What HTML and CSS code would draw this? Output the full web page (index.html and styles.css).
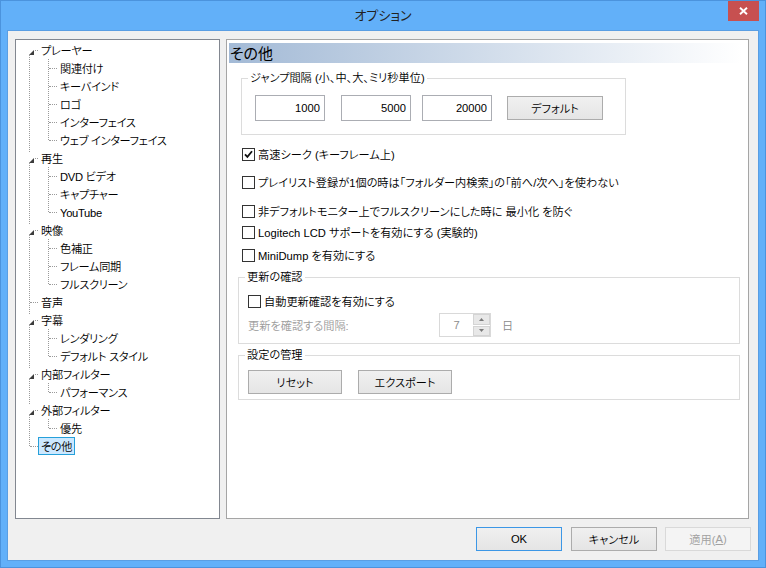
FILE: index.html
```html
<!DOCTYPE html>
<html lang="ja">
<head>
<meta charset="utf-8">
<title>オプション</title>
<link rel="stylesheet" href="styles.css">
</head>
<body>
<div class="window">
  <div class="titlebar">
    <div class="title">オプション</div>
    <div class="close"><svg width="9" height="8" viewBox="0 0 9 8"><path d="M1 0.8L8 7.2M8 0.8L1 7.2" stroke="#fff" stroke-width="1.9" fill="none"/></svg></div>
  </div>
  <div class="client">
    <div class="main">
      <div class="tree">
        <ul class="roots">
          <li class="root">
            <div class="row"><span class="exp"><svg width="10" height="10" viewBox="0 0 10 10"><polygon points="9,5 9,10 4,10" fill="#3c3c3c"/></svg></span><span class="label">プレーヤー</span></div>
            <ul class="children">
              <li class="child"><div class="row"><span class="label">関連付け</span></div></li>
              <li class="child"><div class="row"><span class="label">キーバインド</span></div></li>
              <li class="child"><div class="row"><span class="label">ロゴ</span></div></li>
              <li class="child"><div class="row"><span class="label">インターフェイス</span></div></li>
              <li class="child"><div class="row"><span class="label">ウェブ インターフェイス</span></div></li>
            </ul>
          </li>
          <li class="root">
            <div class="row"><span class="exp"><svg width="10" height="10" viewBox="0 0 10 10"><polygon points="9,5 9,10 4,10" fill="#3c3c3c"/></svg></span><span class="label">再生</span></div>
            <ul class="children">
              <li class="child"><div class="row"><span class="label">DVD ビデオ</span></div></li>
              <li class="child"><div class="row"><span class="label">キャプチャー</span></div></li>
              <li class="child"><div class="row"><span class="label">YouTube</span></div></li>
            </ul>
          </li>
          <li class="root">
            <div class="row"><span class="exp"><svg width="10" height="10" viewBox="0 0 10 10"><polygon points="9,5 9,10 4,10" fill="#3c3c3c"/></svg></span><span class="label">映像</span></div>
            <ul class="children">
              <li class="child"><div class="row"><span class="label">色補正</span></div></li>
              <li class="child"><div class="row"><span class="label">フレーム同期</span></div></li>
              <li class="child"><div class="row"><span class="label">フルスクリーン</span></div></li>
            </ul>
          </li>
          <li class="root">
            <div class="row"><span class="spacer"></span><span class="label">音声</span></div>
          </li>
          <li class="root">
            <div class="row"><span class="exp"><svg width="10" height="10" viewBox="0 0 10 10"><polygon points="9,5 9,10 4,10" fill="#3c3c3c"/></svg></span><span class="label">字幕</span></div>
            <ul class="children">
              <li class="child"><div class="row"><span class="label">レンダリング</span></div></li>
              <li class="child"><div class="row"><span class="label">デフォルト スタイル</span></div></li>
            </ul>
          </li>
          <li class="root">
            <div class="row"><span class="exp"><svg width="10" height="10" viewBox="0 0 10 10"><polygon points="9,5 9,10 4,10" fill="#3c3c3c"/></svg></span><span class="label">内部フィルター</span></div>
            <ul class="children">
              <li class="child"><div class="row"><span class="label">パフォーマンス</span></div></li>
            </ul>
          </li>
          <li class="root">
            <div class="row"><span class="exp"><svg width="10" height="10" viewBox="0 0 10 10"><polygon points="9,5 9,10 4,10" fill="#3c3c3c"/></svg></span><span class="label">外部フィルター</span></div>
            <ul class="children">
              <li class="child"><div class="row"><span class="label">優先</span></div></li>
            </ul>
          </li>
          <li class="root selected">
            <div class="row"><span class="spacer"></span><span class="label">その他</span></div>
          </li>
        </ul>
      </div>
      <div class="page">
        <div class="page-title">その他</div>
        <fieldset class="group jump">
          <legend>ジャンプ間隔 (小、中、大、ミリ秒単位)</legend>
          <div class="jump-row">
            <div class="edit">1000</div>
            <div class="edit e2">5000</div>
            <div class="edit e3">20000</div>
            <div class="btn b-default">デフォルト</div>
          </div>
        </fieldset>
        <div class="check c1"><span class="box"><svg width="9" height="9" viewBox="0 0 9 9"><polyline points="1,4.3 3.4,6.9 8,1.3" fill="none" stroke="#111" stroke-width="1.8"/></svg></span>高速シーク (キーフレーム上)</div>
        <div class="check c2"><span class="box"></span>プレイリスト登録が1個の時は「フォルダー内検索」の「前へ/次へ」を使わない</div>
        <div class="check c3"><span class="box"></span>非デフォルトモニター上でフルスクリーンにした時に 最小化 を防ぐ</div>
        <div class="check c4"><span class="box"></span>Logitech LCD サポートを有効にする (実験的)</div>
        <div class="check c5"><span class="box"></span>MiniDump を有効にする</div>
        <fieldset class="group wide update">
          <legend>更新の確認</legend>
          <div class="update-body">
            <div class="check"><span class="box"></span>自動更新確認を有効にする</div>
            <div class="interval">
              <span class="dim-label">更新を確認する間隔:</span>
              <div class="spin">
                <span class="spin-val">7</span>
                <span class="spin-btns">
                  <span class="spin-btn"><svg width="5" height="3" viewBox="0 0 5 3"><polygon points="2.5,0 5,3 0,3" fill="#7a7a7a"/></svg></span>
                  <span class="spin-btn"><svg width="5" height="3" viewBox="0 0 5 3"><polygon points="0,0 5,0 2.5,3" fill="#7a7a7a"/></svg></span>
                </span>
              </div>
              <span class="unit">日</span>
            </div>
          </div>
        </fieldset>
        <fieldset class="group wide manage">
          <legend>設定の管理</legend>
          <div class="manage-row">
            <div class="btn b-wide">リセット</div>
            <div class="btn b-wide b-export">エクスポート</div>
          </div>
        </fieldset>
      </div>
    </div>
    <div class="footer">
      <div class="btn b-foot b-ok">OK</div>
      <div class="btn b-foot b-cancel">キャンセル</div>
      <div class="btn b-foot b-apply">適用(<u>A</u>)</div>
    </div>
  </div>
</div>
</body>
</html>
```

FILE: styles.css
```css
* {
  box-sizing: border-box;
  margin: 0;
  padding: 0;
}

html, body {
  width: 766px;
  height: 568px;
  overflow: hidden;
}

body {
  font-family: "Liberation Sans", "Noto Sans CJK JP", sans-serif;
  font-size: 11.2px;
  font-weight: 350;
  font-feature-settings: "palt";
  color: #000;
  background: #62b0f9;
}

.window {
  width: 766px;
  height: 568px;
  border: 1px solid #4b93dd;
  background: #62b0f9;
  padding: 0 6px 6px;
  display: flex;
  flex-direction: column;
}

/* title bar */
.titlebar {
  height: 29px;
  flex: none;
  display: grid;
  grid-template-columns: 1fr auto 1fr;
  align-items: start;
}

.title {
  grid-column: 2;
  font-size: 13px;
  font-weight: 400;
  line-height: 29px;
  color: #222;
}

.close {
  grid-column: 3;
  justify-self: end;
  width: 31px;
  height: 20px;
  background: #c75050;
  display: flex;
  align-items: center;
  justify-content: center;
}

/* client area */
.client {
  flex: 1;
  background: #f0f0f0;
  border: 1px solid #5a9ee3;
  padding: 8px 7px 9px 7px;
  display: flex;
  flex-direction: column;
}

.main {
  display: flex;
  gap: 6px;
  height: 480px;
  margin-right: 2px;
}

/* tree */
.tree {
  width: 205px;
  border: 1px solid #828790;
  background: #fff;
  padding-top: 1px;
}

.roots,
.children {
  list-style: none;
  position: relative;
}

.roots::before {
  content: "";
  position: absolute;
  left: 13px;
  top: 9px;
  bottom: 9px;
  border-left: 1px dotted #9a9a9a;
}

.children::before {
  content: "";
  position: absolute;
  left: 32px;
  top: 0;
  bottom: 9px;
  border-left: 1px dotted #9a9a9a;
}

.row {
  height: 18px;
  display: flex;
  align-items: center;
  position: relative;
}

.root > .row {
  padding-left: 9px;
}

.root > .row::before {
  content: "";
  position: absolute;
  left: 14px;
  width: 8px;
  top: 9px;
  border-top: 1px dotted #9a9a9a;
}

.child > .row {
  padding-left: 41px;
}

.child > .row::before {
  content: "";
  position: absolute;
  left: 33px;
  width: 8px;
  top: 9px;
  border-top: 1px dotted #9a9a9a;
}

.exp {
  width: 10px;
  height: 10px;
  background: #fff;
  position: relative;
  z-index: 1;
  display: flex;
}

.spacer {
  width: 10px;
  height: 10px;
}

.label {
  padding: 2px 2px 0;
  border: 1px solid transparent;
  line-height: 14px;
  letter-spacing: -0.3px;
  white-space: nowrap;
  position: relative;
  z-index: 1;
}

.root > .row .label {
  margin-left: 3px;
}

.selected > .row .label {
  background: #cce8ff;
  border-color: #26a0da;
}

/* right page */
.page {
  width: 523px;
  border: 1px solid #a5a5a5;
  background: #fff;
  padding-top: 3px;
}

.page-title {
  margin-left: 2px;
  width: 513px;
  height: 20px;
  padding: 1px 0 0 1px;
  font-size: 15px;
  font-weight: 400;
  line-height: 20px;
  background: linear-gradient(to right, #a3bad6, #ffffff);
}

.group {
  border: 1px solid #dcdcdc;
  padding: 0;
}

.group legend {
  margin-left: 6px;
  padding: 0 2px;
  line-height: 16px;
}

.jump {
  margin: 7px 0 0 14px;
  width: 385px;
}

.jump-row {
  display: flex;
  align-items: center;
  padding: 9px 0 13px 13px;
}

.edit {
  width: 70px;
  height: 26px;
  border: 1px solid #abadb3;
  background: #fff;
  text-align: right;
  padding-right: 4px;
  line-height: 24px;
}

.e2 { margin-left: 16px; }
.e3 { margin-left: 11px; }

.btn {
  height: 24px;
  border: 1px solid #acacac;
  background: linear-gradient(#f0f0f0, #e5e5e5);
  display: flex;
  align-items: center;
  justify-content: center;
  white-space: nowrap;
}

.b-default {
  width: 96px;
  margin-left: 15px;
}

/* checkboxes */
.check {
  display: flex;
  align-items: center;
  height: 18px;
  white-space: nowrap;
}

.page > .check {
  margin-left: 15px;
}

.c1 { margin-top: 10px; }
.c2 { margin-top: 10px; }
.c3 { margin-top: 11px; }
.c4 { margin-top: 3px; }
.c5 { margin-top: 5px; }

.box {
  width: 13px;
  height: 13px;
  border: 1px solid #333;
  background: #fff;
  margin-right: 3px;
  display: flex;
  align-items: center;
  justify-content: center;
  flex: none;
}

/* update group */
.wide {
  margin-left: 11px;
  width: 502px;
}

.update {
  margin-top: 5px;
}

.update-body {
  padding: 7px 0 6px 9px;
}

.interval {
  margin-top: 3px;
  height: 24px;
  display: flex;
  align-items: center;
}

.dim-label {
  width: 191px;
  color: #9b9b9b;
}

.spin {
  width: 52px;
  height: 24px;
  border: 1px solid #d9d9d9;
  display: flex;
}

.spin-val {
  flex: 1;
  text-align: center;
  line-height: 22px;
  color: #8c8c8c;
}

.spin-btns {
  width: 17px;
  display: flex;
  flex-direction: column;
  gap: 1px;
}

.spin-btn {
  flex: 1;
  background: #e8e8e8;
  border: 1px solid #d4d4d4;
  display: flex;
  align-items: center;
  justify-content: center;
}

.unit {
  margin-left: 11px;
  color: #8a8a8a;
}

/* manage group */
.manage {
  margin-top: 3px;
}

.manage-row {
  display: flex;
  padding: 7px 0 5px 9px;
}

.b-wide {
  width: 94px;
}

.b-export {
  margin-left: 16px;
}

/* footer */
.footer {
  margin-top: 8px;
  display: flex;
  justify-content: flex-end;
}

.b-foot {
  width: 86px;
}

.b-ok {
  border-color: #3c97e6;
}

.b-cancel {
  margin-left: 9px;
}

.b-apply {
  margin-left: 8px;
  border-color: #d9d9d9;
  background: #f4f4f4;
  color: #a0a0a0;
}
```
